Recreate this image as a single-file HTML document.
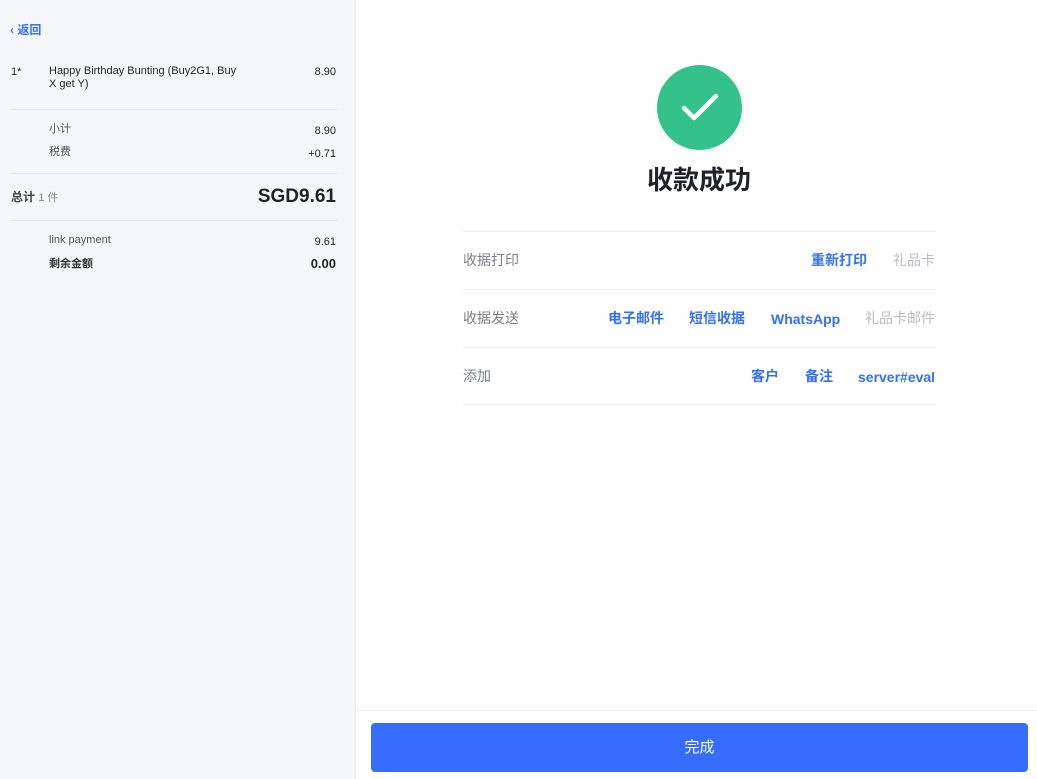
<!DOCTYPE html>
<html><head><meta charset="utf-8"><style>
*{margin:0;padding:0;box-sizing:border-box}
body{width:1037px;height:779px;position:relative;overflow:hidden;font-family:"Liberation Sans","Noto Sans CJK SC",sans-serif;background:#fff;color:#1f2329}
.left{position:absolute;left:0;top:0;width:356px;height:779px;background:#f5f6fa;border-right:1px solid #eceef2}
.a{position:absolute;font-size:11px;color:#1f2329;white-space:nowrap;line-height:14px}
.hl{position:absolute;left:11px;width:326px;height:1px;background:#e3e5ea}
.line{position:absolute;left:463px;width:473px;height:1px;background:#eceef2}
.t{position:absolute;font-size:14px;white-space:nowrap;line-height:20px;height:20px}
.g{color:#7a7f8a}.b{color:#3370ff;font-weight:bold}.gr{color:#b9bcc4}
</style></head><body>
<div class="left">
<div class="a" style="left:10px;top:23px;color:#3370ff;font-size:12px;font-weight:bold">‹ 返回</div>
<div class="a" style="left:11px;top:65px">1*</div>
<div class="a" style="left:49px;top:65px;line-height:13px">Happy Birthday Bunting (Buy2G1, Buy<br>X get Y)</div>
<div class="a" style="right:19px;top:65px">8.90</div>
<div class="hl" style="top:109px"></div>
<div class="a" style="left:49px;top:122px;color:#555">小计</div>
<div class="a" style="right:19px;top:124px">8.90</div>
<div class="a" style="left:49px;top:145px;color:#555">税费</div>
<div class="a" style="right:19px;top:147px">+0.71</div>
<div class="hl" style="top:173px"></div>
<div class="a" style="left:11px;top:190px;font-size:12px;font-weight:bold;color:#444">总计 <span style="font-weight:normal;font-size:11px;color:#888">1 件</span></div>
<div class="a" style="right:19px;top:186px;font-size:19px;line-height:22px;font-weight:bold">SGD9.61</div>
<div class="hl" style="top:220px"></div>
<div class="a" style="left:49px;top:233px;color:#555">link payment</div>
<div class="a" style="right:19px;top:235px">9.61</div>
<div class="a" style="left:49px;top:257px;font-weight:bold;color:#333">剩余金额</div>
<div class="a" style="right:19px;top:257px;font-size:13px;font-weight:bold">0.00</div>
</div>
<div style="position:absolute;left:657px;top:65px;width:85px;height:85px;border-radius:50%;background:#34c18b"></div>
<svg style="position:absolute;left:657px;top:65px" width="85" height="85"><path d="M27 43 L37 53 L59 31" stroke="#fff" stroke-width="4.5" fill="none" stroke-linecap="round" stroke-linejoin="round"/></svg>
<div class="t" style="left:600px;width:198px;text-align:center;top:162px;font-size:26px;font-weight:bold;line-height:36px;height:36px">收款成功</div>
<div class="line" style="top:231px"></div>
<div class="line" style="top:289px"></div>
<div class="line" style="top:347px"></div>
<div class="line" style="top:404px"></div>
<div class="t g" style="left:463px;top:250px">收据打印</div>
<div class="t b" style="left:811px;top:250px">重新打印</div>
<div class="t gr" style="left:893px;top:250px">礼品卡</div>
<div class="t g" style="left:463px;top:308px">收据发送</div>
<div class="t b" style="left:608px;top:308px">电子邮件</div>
<div class="t b" style="left:689px;top:308px">短信收据</div>
<div class="t b" style="left:771px;top:308px;line-height:22px">WhatsApp</div>
<div class="t gr" style="left:865px;top:308px">礼品卡邮件</div>
<div class="t g" style="left:463px;top:366px">添加</div>
<div class="t b" style="left:751px;top:366px">客户</div>
<div class="t b" style="left:805px;top:366px">备注</div>
<div class="t b" style="left:858px;top:366px;line-height:22px">server#eval</div>
<div style="position:absolute;left:357px;top:710px;width:680px;height:1px;background:#f0f1f4"></div>
<div style="position:absolute;left:371px;top:723px;width:657px;height:49px;border-radius:4px;background:#366dff;color:#fff;font-size:15px;text-align:center;line-height:49px">完成</div>
</body></html>
